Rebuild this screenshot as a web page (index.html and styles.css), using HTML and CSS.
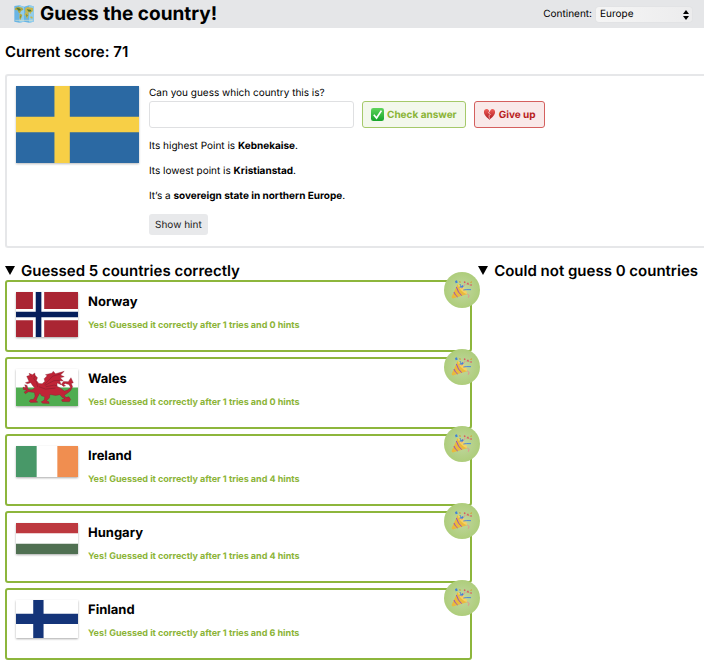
FILE: index.html
```html
<!DOCTYPE html>
<html lang="en">
<head>
<meta charset="utf-8">
<title>Guess the country!</title>
<link rel="stylesheet" href="styles.css">
</head>
<body>
<svg class="defs" aria-hidden="true">
  <defs>
    <linearGradient id="gold" x1="0" x2="1" y2="1"><stop offset="0" stop-color="#f8d658"/><stop offset="1" stop-color="#c98c20"/></linearGradient>
    <linearGradient id="tick" x2="0" y2="1"><stop offset="0" stop-color="#5ed45b"/><stop offset="1" stop-color="#16a52b"/></linearGradient>
    <linearGradient id="heart" x2="0" y2="1"><stop offset="0" stop-color="#f0605a"/><stop offset="1" stop-color="#a9151b"/></linearGradient>
    <symbol id="party" viewBox="0 0 66 60">
      <path d="M20 12 2 50q-1 6 6 5l40-12Q31 31 20 12Z" fill="#e9b93c"/>
      <path d="M16 21q5 17 16 26M9 36q3 10 11 15" fill="none" stroke="#9850bd" stroke-width="3"/>
      <path d="M20 12q9 2 19 12t9 19q-9-2-18-12T20 12Z" fill="#f5d262"/>
      <path d="M27 24q3-8 0-12M37 30q9-2 23-1" fill="none" stroke="#4b87dc" stroke-width="3"/>
      <path d="M32 26q3-8 11-13M49 41l5 6-2 6" fill="none" stroke="#e98c91" stroke-width="3"/>
      <path d="m12 3 6-2 2 7-6 2ZM29 20l5-5 4 4-5 5Z" fill="#3f82d8"/>
      <path d="m46 13 5-6 4 7ZM55 15l7-3v6ZM38 6l4-3 2 5-4 2Z" fill="#dc5962"/>
      <path d="m25 3 5 2-2 4-4-2ZM56 8l6-5 1 5Z" fill="#d4a23e"/>
    </symbol>
  </defs>
</svg>
<header class="topbar">
  <h1 class="title">
    <svg class="map" viewBox="0 0 60 54" aria-hidden="true">
      <path d="M1 3 16 1l14 4 15-4 14 3v46l-14 3-15-3-14 3-15-3Z" fill="#69b5e4"/>
      <path d="M16 1 30 5v45l-14 3ZM45 1l14 3v46l-14 3Z" fill="#91cdec"/>
      <path d="m3 10 9-5 13 3 3 6-7 4-3 7-4-2-3-7-8-1ZM17 25l8 5-2 6-4 10-3-7Z" fill="#b2a744"/>
      <path d="m33 11 7-5 17 3v10l-5 2-2 6-4-5-5 2-7-4ZM34 22l9 3 1 6-5 12-3-10-5-4ZM50 34l6 2-1 5-6-2Z" fill="#c8b64d"/>
      <path d="m6 8 10 2 5 5-7 2M38 13l12 1 3 5-9 1M37 27l4 4-3 6M19 31l2 4-2 5" fill="#517c38"/>
      <path d="M4 46h52" stroke="#e8e6c8" stroke-width="3" opacity=".6"/>
    </svg>
    Guess the country!
  </h1>
  <div class="continent">
    <label for="continent">Continent:</label>
    <span class="select-wrap">
      <select id="continent"><option>Europe</option></select>
      <svg class="arrows" viewBox="0 0 6 10" aria-hidden="true"><path d="M0 4 3 0l3 4ZM0 6h6l-3 4Z"/></svg>
    </span>
  </div>
</header>
<main>
  <h2 class="score">Current score: 71</h2>
  <section class="quiz">
    <svg class="flag-large" viewBox="0 0 16 10" role="img" aria-label="Flag to guess"><path fill="#2b69a3" d="M0 0h16v10H0z"/><path fill="#f7cf46" d="M5 0h2v10H5zM0 4h16v2H0z"/></svg>
    <div class="question">
      <label for="answer">Can you guess which country this is?</label>
      <form class="answer-row">
        <input id="answer" type="text">
        <button type="button" class="btn check">
          <svg class="emoji" viewBox="0 0 14 14" aria-hidden="true"><rect width="14" height="14" rx="2.5" fill="url(#tick)"/><path d="m3 7.2 3 3.6 5.2-8" fill="none" stroke="#fff" stroke-width="1.8"/></svg>
          Check answer
        </button>
        <button type="button" class="btn give-up">
          <svg class="emoji" viewBox="0 0 14 14" aria-hidden="true"><path d="M6.7 3.1C5-.2 1 .8 1 4.4c0 3.5 3.5 5.9 6 8.3 2.500-2.400 6-4.800 6-8.300C13 .8 9 .1 7.700 3L6 5.300l2 1.500-1.400 1.700L7.300 11l-.300-3 1.600-1.400-2-1.300Z" fill="url(#heart)"/><path d="M7.500 2.800 5.900 5.300l2 1.500-1.500 1.700L7 11.500" fill="none" stroke="#f8d5d4" stroke-width=".8"/></svg>
          Give up
        </button>
      </form>
      <p>Its highest Point is <b>Kebnekaise</b>.</p>
      <p>Its lowest point is <b>Kristianstad</b>.</p>
      <p>It’s a <b>sovereign state in northern Europe</b>.</p>
      <button type="button" class="hint">Show hint</button>
    </div>
  </section>
  <div class="results">
    <details open>
      <summary><svg class="marker" viewBox="0 0 10 9" aria-hidden="true"><path d="M0 0h10L5 9Z"/></svg>Guessed 5 countries correctly</summary>
      <ul class="cards">
        <li class="card">
          <svg class="flag" viewBox="0 0 22 16" role="img" aria-label="Norway"><path fill="#aa2533" d="M0 0h22v16H0z"/><path fill="#fff" d="M6 0h4v16H6zM0 6h22v4H0z"/><path fill="#061e5b" d="M7 0h2v16H7zM0 7h22v2H0z"/></svg>
          <div><h3>Norway</h3><p class="result">Yes! Guessed it correctly after 1 tries and 0 hints</p></div>
          <span class="badge"><svg viewBox="0 0 66 60" aria-hidden="true"><use href="#party"/></svg></span>
        </li>
        <li class="card">
          <svg class="flag" viewBox="0 0 185 111" role="img" aria-label="Wales">
            <path fill="#fff" d="M0 0h185v56H0z"/><path fill="#4fac50" d="M0 55h185v56H0z"/>
            <path fill="#c02437" stroke="#751c2b" stroke-width="1" d="m32 22 9-3-2-6 10 4 7-5 1 7 7 7-3 8 7 9 10 1 8-7-2-8 9-9-5-3 20-5 3-5 7 7 26-7-11 11 11 5-12 3 9 10-11-1 5 12-12-5-1 10 11 5 11 9 10-3 9-8-5-9-11-3-5 4 6 3-6 2-7-6 7-9 14 1 8-12 7 15-6 2 4 10-7 13-11 8-7 4 5 7 9-2 5 8-4 7-21-1-2-5 10-4-8-3-7-8-13 2-17-3-1 10-9 9 7 3 1 5-20-1-4-4 9-5 2-10-10-3-5-8-7 12-4 10 5 5-21 1-5-4 5-5 8 0 5-10-2-11-18-2-9 6-4-5 9-5-11-3-1-7 8 3-3-10 7 2 3 12 12 1 8-6-6-6-6-9-10 3-6-3 11-4Z"/>
            <path fill="none" stroke="#7c1d2c" stroke-width="1.500" d="m85 46 25-25 23-6M86 49l27-14 18-1M89 53l25-5 12 4M57 20l-4 9 8 10 4 15M69 53l19 7 30-3M47 22l-2 1"/>
          </svg>
          <div><h3>Wales</h3><p class="result">Yes! Guessed it correctly after 1 tries and 0 hints</p></div>
          <span class="badge"><svg viewBox="0 0 66 60" aria-hidden="true"><use href="#party"/></svg></span>
        </li>
        <li class="card">
          <svg class="flag" viewBox="0 0 6 3" role="img" aria-label="Ireland"><path fill="#fff" d="M0 0h6v3H0z"/><path fill="#489868" d="M0 0h2v3H0z"/><path fill="#f08e50" d="M4 0h2v3H4z"/></svg>
          <div><h3>Ireland</h3><p class="result">Yes! Guessed it correctly after 1 tries and 4 hints</p></div>
          <span class="badge"><svg viewBox="0 0 66 60" aria-hidden="true"><use href="#party"/></svg></span>
        </li>
        <li class="card">
          <svg class="flag" viewBox="0 0 6 3" role="img" aria-label="Hungary"><path fill="#fff" d="M0 0h6v3H0z"/><path fill="#bd393f" d="M0 0h6v1H0z"/><path fill="#507052" d="M0 2h6v1H0z"/></svg>
          <div><h3>Hungary</h3><p class="result">Yes! Guessed it correctly after 1 tries and 4 hints</p></div>
          <span class="badge"><svg viewBox="0 0 66 60" aria-hidden="true"><use href="#party"/></svg></span>
        </li>
        <li class="card">
          <svg class="flag" viewBox="0 0 18 11" role="img" aria-label="Finland"><path fill="#fff" d="M0 0h18v11H0z"/><path fill="#143479" d="M5 0h3v11H5zM0 4h18v3H0z"/></svg>
          <div><h3>Finland</h3><p class="result">Yes! Guessed it correctly after 1 tries and 6 hints</p></div>
          <span class="badge"><svg viewBox="0 0 66 60" aria-hidden="true"><use href="#party"/></svg></span>
        </li>
      </ul>
    </details>
    <details open>
      <summary><svg class="marker" viewBox="0 0 10 9" aria-hidden="true"><path d="M0 0h10L5 9Z"/></svg>Could not guess 0 countries</summary>
    </details>
  </div>
</main>
</body>
</html>
```
FILE: styles.css
```css
* { box-sizing: border-box; }
body { margin: 0; background: #fff; color: #000; font: 10px/16px Inter, "Liberation Sans", sans-serif; text-rendering: geometricPrecision; overflow-x: hidden; }
h1, h2, h3, p, ul { margin: 0; padding: 0; }
button, input, select { font: inherit; color: inherit; text-rendering: inherit; }
svg { display: block; }
.defs { position: absolute; width: 0; height: 0; }
.topbar { display: flex; justify-content: space-between; align-items: center; height: 28px; padding: 0 12px 0 14px; background: #e5e6e8; }
.title { display: flex; align-items: center; gap: 6px; font-size: 19px; line-height: 28px; font-weight: 700; }
.map { width: 20px; height: 18px; }
.continent { display: flex; align-items: center; gap: 4px; }
.select-wrap { position: relative; }
select { display: block; appearance: none; width: 96px; height: 15px; line-height: 15px; padding: 0 4px; border: 0; border-radius: 3px; background: linear-gradient(90deg, #f5f5f5, #ececed); box-shadow: 0 0 1px #ccc; }
.arrows { position: absolute; right: 3px; top: 3px; width: 6px; height: 10px; pointer-events: none; }
main { padding-left: 5px; }
.score { margin: 14px 0 12px; font-size: 15px; line-height: 20px; font-weight: 600; }
.quiz { display: flex; align-items: flex-start; gap: 10px; min-height: 174px; padding: 10px 9px; border: 2px solid #e6e7e9; border-right: 0; border-radius: 3px 0 0 3px; }
.flag-large { flex: none; width: 123px; height: 77px; box-shadow: 0 1px 2px #0004; }
.question { flex: 1; }
.question label { display: block; line-height: 15px; }
.answer-row { display: flex; gap: 8px; margin-bottom: 10px; }
.answer-row input { width: 205px; height: 27px; padding: 0 6px; border: 1px solid #dfe0e2; border-radius: 3px; }
.question p { margin-bottom: 9px; }
.btn { display: flex; align-items: center; justify-content: center; gap: 3px; height: 27px; padding: 0 8px; border: 1px solid; border-radius: 3px; font-weight: 700; white-space: nowrap; }
.emoji { width: 13px; height: 13px; }
.check { color: #8ab436; background: #f3f8ec; border-color: #a5c96a; }
.give-up { color: #b81d1c; background: #f9e9e9; border-color: #d4605e; }
.hint { display: block; height: 21px; margin-top: 10px; padding: 0 6px; border: 0; border-radius: 3px; background: #e8e9eb; color: #222; }
.results { display: grid; grid-template-columns: 1fr auto; gap: 6px; margin-top: 13px; padding-right: 6px; }
summary { display: flex; align-items: center; gap: 6px; font-size: 15px; line-height: 19px; font-weight: 600; list-style: none; white-space: nowrap; }
.marker { width: 10px; height: 9px; }
.cards { display: grid; gap: 5px; list-style: none; }
.card { position: relative; display: flex; align-items: flex-start; gap: 10px; min-height: 72px; padding: 10px 9px; border: 2px solid #8db63c; border-radius: 3px; }
.flag { flex: none; width: 62px; box-shadow: 0 1px 2px #0005; }
.card h3 { font-size: 13px; line-height: 20px; font-weight: 700; }
.result { margin-top: 7px; color: #8bb437; font-size: 9px; line-height: 14px; font-weight: 700; }
.badge { position: absolute; top: -10px; right: -10px; display: grid; place-items: center; width: 36px; height: 36px; border-radius: 50%; background: radial-gradient(#c1d7a0, #a6c96c); }
.badge svg { width: 22px; height: 20px; }
```
